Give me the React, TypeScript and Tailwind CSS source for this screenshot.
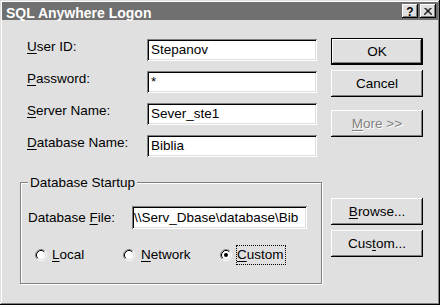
import React from "react";

const raised =
  "shadow-[inset_-1px_-1px_0_#000,inset_1px_1px_0_#fff,inset_-2px_-2px_0_#808080,inset_2px_2px_0_#dfdfdf]";
const raisedDefault =
  "shadow-[inset_0_0_0_1px_#000,inset_-2px_-2px_0_#000,inset_2px_2px_0_#fff,inset_-3px_-3px_0_#808080,inset_3px_3px_0_#dfdfdf]";
const sunken =
  "shadow-[inset_1px_1px_0_#808080,inset_-1px_-1px_0_#fff,inset_2px_2px_0_#000,inset_-2px_-2px_0_#dfdfdf]";

function Radio({ checked }: { checked?: boolean }) {
  return (
    <svg width="12" height="12" viewBox="0 0 12 12" className="shrink-0">
      <circle cx="6" cy="6" r="4.5" fill="#fff" />
      <path d="M 9.89 2.11 A 5.5 5.5 0 0 0 2.11 9.89" fill="none" stroke="#808080" strokeWidth="1" />
      <path d="M 9.89 2.11 A 5.5 5.5 0 0 1 2.11 9.89" fill="none" stroke="#fff" strokeWidth="1" />
      <path d="M 9.18 2.82 A 4.5 4.5 0 0 0 2.82 9.18" fill="none" stroke="#000" strokeWidth="1" />
      <path d="M 9.18 2.82 A 4.5 4.5 0 0 1 2.82 9.18" fill="none" stroke="#dfdfdf" strokeWidth="1" />
      {checked && <circle cx="6" cy="6" r="2" fill="#000" />}
    </svg>
  );
}

function Field({ label, k, rest, value }: { label?: string; k: string; rest: string; value: string }) {
  return (
    <div className="flex h-[22px] items-start">
      <div className="w-[120px] leading-[16px]">
        <span className="underline underline-offset-[2px]">{k}</span>
        {rest}
      </div>
      <div className={`w-[170px] h-[22px] bg-white ${sunken} flex items-center px-[4px] leading-[16px] whitespace-nowrap overflow-hidden`}>
        {value}
      </div>
    </div>
  );
}

function Btn({ children, def, className = "" }: { children: React.ReactNode; def?: boolean; className?: string }) {
  return (
    <div
      className={`w-[92px] h-[27px] bg-[#e0e0e0] ${def ? raisedDefault : raised} flex items-center justify-center leading-[16px] ${className}`}
    >
      {children}
    </div>
  );
}

export default function App() {
  return (
    <div
      className="w-[440px] h-[305px] bg-[#e0e0e0] p-[2px] flex flex-col text-[13.5px] text-black shadow-[inset_-1px_-1px_0_#000,inset_1px_1px_0_#dfdfdf,inset_-2px_-2px_0_#808080,inset_2px_2px_0_#fff]"
      style={{ fontFamily: '"Liberation Sans", Arial, sans-serif' }}
    >
      {/* Title bar */}
      <div className="h-[18px] bg-[#707070] flex items-start justify-between">
        <span className="pl-[4px] pt-[3px] leading-[16px] text-[14px] font-bold text-white">SQL Anywhere Logon</span>
        <div className="flex gap-[2px] mt-[2px] mr-[2px]">
          <div className={`w-[16px] h-[14px] bg-[#e0e0e0] ${raised} flex items-center justify-center text-[12px] font-bold leading-none pt-[1px]`}>
            ?
          </div>
          <div className={`w-[16px] h-[14px] bg-[#e0e0e0] ${raised} flex items-center justify-center`}>
            <svg width="8" height="7" viewBox="0 0 8 7">
              <path d="M0.5 0 L7.5 7 M1.5 0 L8.5 7 M7.5 0 L0.5 7 M6.5 0 L-0.5 7" stroke="#000" strokeWidth="1" fill="none" />
            </svg>
          </div>
        </div>
      </div>

      {/* Body */}
      <div className="flex">
        <div className="w-[329px] pt-[19px]">
          <div className="pl-[25px] flex flex-col gap-[10px]">
            <Field k="U" rest="ser ID:" value="Stepanov" />
            <Field k="P" rest="assword:" value="*" />
            <Field k="S" rest="erver Name:" value="Sever_ste1" />
            <Field k="D" rest="atabase Name:" value="Biblia" />
          </div>

          <div className="relative mt-[25px] ml-[18px] w-[302px] h-[102px] border border-[#808080] shadow-[inset_1px_1px_0_#fff,1px_1px_0_#fff] pt-[23px] pl-[7px]">
            <span className="absolute left-[7px] -top-[8px] px-[2px] bg-[#e0e0e0] leading-[16px]">Database Startup</span>
            <div className="flex items-center">
              <div className="w-[104px] leading-[16px]">
                Database <span className="underline underline-offset-[2px]">F</span>ile:
              </div>
              <div className={`w-[175px] h-[23px] bg-white ${sunken} flex items-center pl-[2px] leading-[16px] whitespace-nowrap overflow-hidden`}>
                \\Serv_Dbase\database\Bib
              </div>
            </div>
            <div className="flex items-center h-[20px] mt-[16px] pl-[7px]">
              <div className="w-[88px] flex items-center gap-[5px] leading-[16px]">
                <Radio />
                <span>
                  <span className="underline underline-offset-[2px]">L</span>ocal
                </span>
              </div>
              <div className="w-[97px] flex items-center gap-[6px] leading-[16px]">
                <Radio />
                <span>
                  <span className="underline underline-offset-[2px]">N</span>etwork
                </span>
              </div>
              <div className="flex items-center gap-[4px] leading-[16px]">
                <Radio checked />
                <span className="border border-dotted border-black py-[1px] pr-[1px]">
                  <span className="underline underline-offset-[2px]">C</span>ustom
                </span>
              </div>
            </div>
          </div>
        </div>

        <div className="w-[92px] pt-[18px] flex flex-col">
          <Btn def>OK</Btn>
          <Btn className="mt-[5px]">Cancel</Btn>
          <Btn className="mt-[13px] text-[#808080] [text-shadow:1px_1px_0_#fff]">
            <span>
              <span className="underline underline-offset-[2px]">M</span>ore &gt;&gt;
            </span>
          </Btn>
          <Btn className="mt-[61px]">
            <span>
              <span className="underline underline-offset-[2px]">B</span>rowse...
            </span>
          </Btn>
          <Btn className="mt-[5px]">
            <span>
              Cus<span className="underline underline-offset-[2px]">t</span>om...
            </span>
          </Btn>
        </div>
      </div>
    </div>
  );
}
